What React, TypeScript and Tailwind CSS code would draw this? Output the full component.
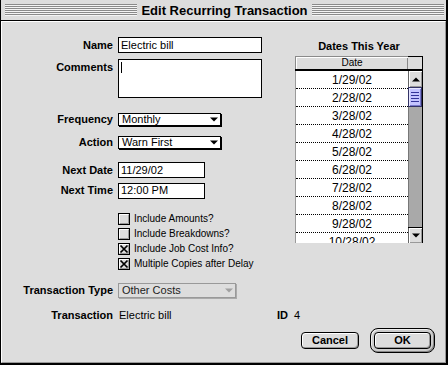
import React from "react";

const dates = [
  "1/29/02",
  "2/28/02",
  "3/28/02",
  "4/28/02",
  "5/28/02",
  "6/28/02",
  "7/28/02",
  "8/28/02",
  "9/28/02",
  "10/28/02",
];

function Stripes() {
  return (
    <div className="flex-1 flex flex-col">
      {[0, 1, 2, 3, 4, 5].map((i) => (
        <div key={i} className="h-[2px] border-t border-[#8a8a8a] bg-[#f4f4f4]" />
      ))}
    </div>
  );
}

function Label({ children, className = "" }: { children: React.ReactNode; className?: string }) {
  return (
    <div className={`w-[111px] shrink-0 text-right font-bold text-[11px] leading-[13px] ${className}`}>
      {children}
    </div>
  );
}

function TextField({ value, className = "" }: { value: string; className?: string }) {
  return (
    <div className={`h-[16px] bg-white border border-black flex items-center pl-[2px] text-[11px] leading-none ${className}`}>
      {value}
    </div>
  );
}

function Popup({ value, className = "", disabled = false }: { value: string; className?: string; disabled?: boolean }) {
  return (
    <div
      className={`flex items-center justify-between border text-[11px] leading-none pl-[3px] pr-[2px] ${
        disabled
          ? "bg-[#dddddd] border-[#999999] text-[#222222] shadow-[1px_1px_0_#aaaaaa]"
          : "bg-white border-black shadow-[1px_1px_0_#000000]"
      } ${className}`}
    >
      <span>{value}</span>
      <svg width="8" height="5" viewBox="0 0 8 5">
        <path d="M0 0.5H8L4 4.5Z" fill={disabled ? "#a0a0a0" : "#000000"} />
      </svg>
    </div>
  );
}

function Checkbox({ checked, label }: { checked: boolean; label: string }) {
  return (
    <div className="flex items-center h-[12px]">
      <svg width="12" height="12" viewBox="0 0 12 12" className="shrink-0">
        <rect x="0.5" y="0.5" width="11" height="11" fill="#dddddd" stroke="#000000" />
        <path d="M1.5 10V1.5H10" stroke="#ffffff" fill="none" />
        <path d="M2 10.5H10.5V2" stroke="#999999" fill="none" />
        {checked && (
          <path d="M2.5 2.5L9.5 9.5M9.5 2.5L2.5 9.5" stroke="#000000" strokeWidth="1.7" />
        )}
      </svg>
      <span className="ml-[4px] text-[10px] leading-none">{label}</span>
    </div>
  );
}

function ScrollArrow({ up }: { up: boolean }) {
  return (
    <div className="h-full w-full flex items-center justify-center bg-[#dddddd] shadow-[inset_1px_1px_0_#ffffff,inset_-1px_-1px_0_#999999]">
      <svg width="8" height="5" viewBox="0 0 8 5">
        {up ? <path d="M0 4.5H8L4 0.5Z" fill="#000" /> : <path d="M0 0.5H8L4 4.5Z" fill="#000" />}
      </svg>
    </div>
  );
}

function DatesTable() {
  return (
    <div className="w-[128px] h-[187px] flex flex-col">
      <div className="flex h-[13px]">
        <div className="w-[113px] h-full flex items-center justify-center bg-[#dddddd] border-t border-l border-[#8a8a8a] shadow-[inset_1px_1px_0_#ffffff,inset_-1px_0_0_#888888] text-[10px] leading-none">
          Date
        </div>
        <div className="w-[15px] h-full bg-[#dddddd] border-t border-r border-black" />
      </div>
      <div className="h-[2px] bg-black" />
      <div className="flex flex-1 min-h-0">
        <div className="w-[113px] h-full bg-white overflow-hidden border-l border-[#9a9a9a]">
          {dates.map((d) => (
            <div
              key={d}
              className="h-[18px] flex items-center justify-center border-b border-dotted border-black text-[12px] leading-none"
            >
              {d}
            </div>
          ))}
        </div>
        <div className="w-[15px] h-full flex flex-col border-r border-black">
          <div className="h-[16px] border-l border-[#666666]">
            <ScrollArrow up />
          </div>
          <div className="h-[20px] flex flex-col items-center justify-center gap-[2px] bg-[#c4c4ff] border border-[#333366] shadow-[inset_1px_1px_0_#e6e6ff,inset_-1px_-1px_0_#7777cc]">
            {[0, 1, 2, 3].map((i) => (
              <div key={i} className="w-[8px] h-[1px] bg-[#333399]" />
            ))}
          </div>
          <div className="flex-1 bg-[#a9a9a9] border-l border-[#777777]" />
          <div className="h-[1px] bg-black" />
          <div className="h-[15px] border-l border-[#666666]">
            <ScrollArrow up={false} />
          </div>
        </div>
      </div>
    </div>
  );
}

export default function App() {
  return (
    <div className="w-[448px] h-[365px] overflow-hidden flex flex-col bg-[#dddddd] border-l border-black border-r-2 border-b-2 text-black font-['Liberation_Sans','Arial',sans-serif]">
      {/* Title bar */}
      <div className="h-[21px] shrink-0 flex items-center pl-[4px] pr-[2px] border-b border-black bg-[#dddddd]">
        <Stripes />
        <div className="px-[4px] text-[13px] font-bold leading-none whitespace-nowrap">Edit Recurring Transaction</div>
        <Stripes />
      </div>

      {/* Content */}
      <div className="flex-1 flex flex-col border-t border-l border-white border-r border-b border-r-[#999999] border-b-[#999999]">
        <div className="flex pt-[15px]">
          {/* Left form */}
          <div className="w-[260px] flex flex-col">
            <div className="flex items-center h-[16px]">
              <Label>Name</Label>
              <TextField value="Electric bill" className="ml-[5px] w-[144px]" />
            </div>
            <div className="flex items-start mt-[6px]">
              <Label className="mt-[2px]">Comments</Label>
              <div className="ml-[5px] w-[144px] h-[39px] bg-white border border-black pl-[2px] pt-[2px]">
                <div className="w-[1px] h-[11px] bg-black" />
              </div>
            </div>
            <div className="flex items-center h-[13px] mt-[15px]">
              <Label>Frequency</Label>
              <Popup value="Monthly" className="ml-[5px] w-[103px] h-[13px]" />
            </div>
            <div className="flex items-center h-[13px] mt-[10px]">
              <Label>Action</Label>
              <Popup value="Warn First" className="ml-[5px] w-[103px] h-[13px]" />
            </div>
            <div className="flex items-center h-[16px] mt-[13px]">
              <Label>Next Date</Label>
              <TextField value="11/29/02" className="ml-[5px] w-[87px]" />
            </div>
            <div className="flex items-center h-[15px] mt-[5px]">
              <Label>Next Time</Label>
              <TextField value="12:00 PM" className="ml-[5px] w-[87px] h-[15px]" />
            </div>
            <div className="flex flex-col gap-[3px] mt-[15px] ml-[116px]">
              <Checkbox checked={false} label="Include Amounts?" />
              <Checkbox checked={false} label="Include Breakdowns?" />
              <Checkbox checked label="Include Job Cost Info?" />
              <Checkbox checked label="Multiple Copies after Delay" />
            </div>
          </div>

          {/* Right table */}
          <div className="ml-[33px] w-[128px] flex flex-col">
            <div className="mt-[2px] h-[14px] text-center font-bold text-[11px] leading-[14px]">Dates This Year</div>
            <div className="mt-[3px]">
              <DatesTable />
            </div>
          </div>
        </div>

        {/* Transaction type */}
        <div className="flex items-center h-[15px] mt-[13px]">
          <Label>Transaction Type</Label>
          <Popup value="Other Costs" disabled className="ml-[5px] w-[118px] h-[15px]" />
        </div>

        {/* Transaction info */}
        <div className="flex items-center mt-[10px] h-[14px]">
          <Label>Transaction</Label>
          <div className="ml-[6px] w-[158px] text-[11px] leading-none">Electric bill</div>
          <div className="font-bold text-[11px] leading-none">ID</div>
          <div className="ml-[6px] text-[11px] leading-none">4</div>
        </div>

        {/* Buttons */}
        <div className="flex items-center justify-end mt-[6px] pr-[10px]">
          <div className="w-[58px] h-[17px] flex items-center justify-center rounded-[4px] border border-black bg-[#dddddd] shadow-[inset_1px_1px_0_#ffffff,inset_-1px_-1px_0_#999999] text-[11px] font-bold leading-none">
            Cancel
          </div>
          <div className="ml-[11px] p-[3px] rounded-[8px] border border-black bg-[#cccccc] shadow-[inset_1px_1px_0_#eeeeee,inset_-1px_-1px_0_#888888]">
            <div className="w-[57px] h-[17px] flex items-center justify-center rounded-[4px] border border-black bg-[#dddddd] shadow-[inset_1px_1px_0_#ffffff,inset_-1px_-1px_0_#999999] text-[11px] font-bold leading-none">
              OK
            </div>
          </div>
        </div>
      </div>
    </div>
  );
}
